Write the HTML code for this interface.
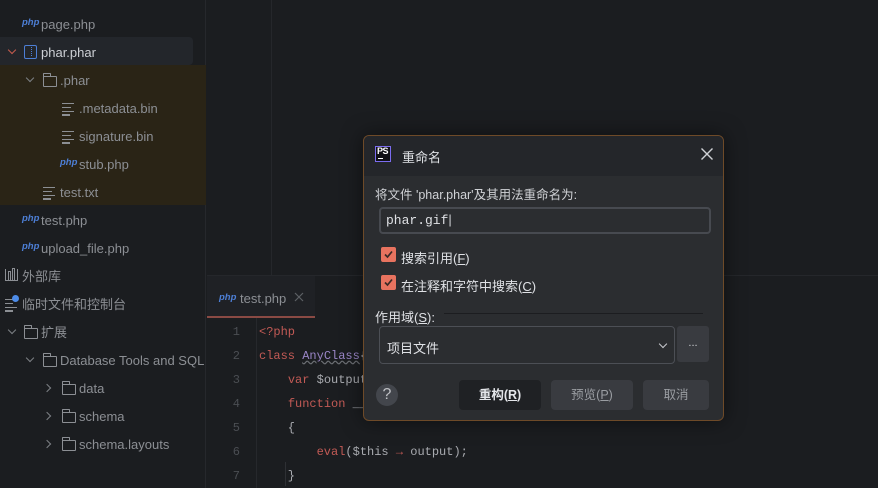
<!DOCTYPE html>
<html><head><meta charset="utf-8"><style>
*{box-sizing:border-box;margin:0;padding:0}
body{width:878px;height:488px;overflow:hidden;background:#1b1d20;font-family:"Liberation Sans","Noto Sans CJK SC",sans-serif;font-size:13px;color:#a9abb0;position:relative}
.a{position:absolute;white-space:nowrap}
.php{position:absolute;font-style:italic;font-weight:bold;font-size:9.5px;color:#4d7fd6;font-family:"Liberation Sans",sans-serif}
.row{position:absolute;height:28px;line-height:29px;white-space:nowrap;color:#8c8f94}
.chev{position:absolute;width:6px;height:6px;border-right:1.5px solid #7d8085;border-bottom:1.5px solid #7d8085}
.fold{position:absolute;width:14px;height:11px;border:1.3px solid #8c8f94;border-radius:1px}
.fold:before{content:"";position:absolute;left:-1.3px;top:-4px;width:6px;height:3px;border:1.3px solid #8c8f94;border-bottom:none;border-radius:1px 1px 0 0}
.txt{position:absolute;width:12px}
.txt i{display:block;height:1.3px;background:#8c8f94;margin-bottom:2.5px}
.code{position:absolute;font-family:"Liberation Mono",monospace;font-size:12px;white-space:pre;line-height:24px}
.ln{position:absolute;left:226px;width:14px;text-align:right;font-family:"Liberation Mono",monospace;font-size:12px;color:#4b4e53}
.cb{position:absolute;width:15px;height:15px;background:#e8735f;border-radius:2px}
.cb svg{position:absolute;left:0;top:0}
.btn{position:absolute;height:30px;line-height:30px;text-align:center;border-radius:4px;font-size:12.5px}
</style></head><body>
<div class="a" style="left:0;top:0;width:206px;height:488px;background:#1b1d20;border-right:1px solid #26282c"></div>
<div class="a" style="left:0;top:65px;width:206px;height:140px;background:#2a2416"></div>
<div class="a" style="left:0;top:37px;width:193px;height:28px;background:#23262b;border-radius:0 4px 4px 0"></div>

<span class="php" style="left:22px;top:17px">php</span><div class="row" style="left:41px;top:10px">page.php</div>
<div class="chev" style="left:9px;top:47px;transform:rotate(45deg);border-color:#c75c4e"></div>
<div class="a" style="left:24px;top:45px;width:13px;height:14px;border:1.3px solid #4d7fd6;border-radius:2px"></div>
<div class="a" style="left:29px;top:47px;width:3px;height:9px;border-right:1.5px dotted #4d7fd6"></div>
<div class="row" style="left:41px;top:38px;color:#cdd0d5">phar.phar</div>
<div class="chev" style="left:27px;top:75px;transform:rotate(45deg)"></div>
<div class="fold" style="left:43px;top:76px"></div><div class="row" style="left:60px;top:66px">.phar</div>
<div class="txt" style="left:62px;top:103px"><i></i><i style="width:9px"></i><i></i><i style="width:8px"></i></div><div class="row" style="left:79px;top:94px">.metadata.bin</div>
<div class="txt" style="left:62px;top:131px"><i></i><i style="width:9px"></i><i></i><i style="width:8px"></i></div><div class="row" style="left:79px;top:122px">signature.bin</div>
<span class="php" style="left:60px;top:157px">php</span><div class="row" style="left:79px;top:150px">stub.php</div>
<div class="txt" style="left:43px;top:187px"><i></i><i style="width:9px"></i><i></i><i style="width:8px"></i></div><div class="row" style="left:60px;top:178px">test.txt</div>
<span class="php" style="left:22px;top:213px">php</span><div class="row" style="left:41px;top:206px">test.php</div>
<span class="php" style="left:22px;top:241px">php</span><div class="row" style="left:41px;top:234px">upload_file.php</div>
<div class="a" style="left:5px;top:269px;width:13px;height:12px;border:1.3px solid #8c8f94;border-top:none"></div>
<div class="a" style="left:8px;top:271px;width:3px;height:10px;border:1.3px solid #8c8f94;border-bottom:none"></div>
<div class="a" style="left:12px;top:268px;width:3px;height:13px;border:1.3px solid #8c8f94;border-bottom:none"></div>
<div class="row" style="left:22px;top:262px">外部库</div>
<div class="txt" style="left:5px;top:299px"><i style="width:8px"></i><i style="width:8px"></i><i></i><i style="width:8px"></i></div>
<div class="a" style="left:12px;top:295px;width:7px;height:7px;border-radius:50%;background:#4d8ce8"></div>
<div class="row" style="left:22px;top:290px">临时文件和控制台</div>
<div class="chev" style="left:9px;top:327px;transform:rotate(45deg)"></div>
<div class="fold" style="left:24px;top:328px"></div><div class="row" style="left:41px;top:318px">扩展</div>
<div class="chev" style="left:27px;top:355px;transform:rotate(45deg)"></div>
<div class="fold" style="left:43px;top:356px"></div><div class="row" style="left:60px;top:346px">Database Tools and SQL</div>
<div class="chev" style="left:44px;top:385px;transform:rotate(-45deg)"></div>
<div class="fold" style="left:62px;top:384px"></div><div class="row" style="left:79px;top:374px">data</div>
<div class="chev" style="left:44px;top:413px;transform:rotate(-45deg)"></div>
<div class="fold" style="left:62px;top:412px"></div><div class="row" style="left:79px;top:402px">schema</div>
<div class="chev" style="left:44px;top:441px;transform:rotate(-45deg)"></div>
<div class="fold" style="left:62px;top:440px"></div><div class="row" style="left:79px;top:430px">schema.layouts</div>

<div class="a" style="left:271px;top:0;width:1px;height:275px;background:#25272b"></div>
<div class="a" style="left:207px;top:275px;width:671px;height:1px;background:#25272b"></div>
<div class="a" style="left:207px;top:276px;width:108px;height:42px;background:#1f2125"></div>
<div class="a" style="left:207px;top:316px;width:108px;height:2px;background:#8a4a44"></div>
<span class="php" style="left:219px;top:292px">php</span>
<div class="a" style="left:240px;top:291px;color:#8c8f94">test.php</div>
<svg class="a" style="left:294px;top:292px" width="10" height="10"><path d="M1 1L9 9M9 1L1 9" stroke="#5d6065" stroke-width="1.2"/></svg>
<div class="a" style="left:256px;top:318px;width:1px;height:170px;background:#26282c"></div>
<div class="a" style="left:285px;top:462px;width:1px;height:24px;background:#2e3034"></div>
<div class="ln" style="top:325px">1</div><div class="ln" style="top:349px">2</div><div class="ln" style="top:373px">3</div><div class="ln" style="top:397px">4</div><div class="ln" style="top:421px">5</div><div class="ln" style="top:445px">6</div><div class="ln" style="top:469px">7</div>
<div class="code" style="left:259px;top:320px"><span style="color:#c25a55">&lt;?php</span>
<span style="color:#c25a55">class</span> <span style="color:#9b86c8;text-decoration:underline wavy #6b6e73">AnyClass</span>{
    <span style="color:#c25a55">var</span> <span style="color:#a9abb0">$output</span>
    <span style="color:#c25a55">function</span> __
    {
        <span style="color:#c25a55">eval</span>($this <span style="color:#c25a55">→</span> output);
    }</div>

<div class="a" style="left:363px;top:135px;width:361px;height:286px;background:#2b2d30;border:1px solid #6e4a28;border-radius:6px;box-shadow:0 0 20px rgba(0,0,0,.5);overflow:hidden">
 <div class="a" style="left:0;top:0;width:361px;height:40px;background:#24262a"></div>
</div>
<div class="a" style="left:375px;top:146px;width:16px;height:16px;background:#101015;border:1.3px solid #7b6cf0"></div>
<div class="a" style="left:377px;top:146px;font-size:9px;font-weight:bold;color:#fff;letter-spacing:-0.5px">PS</div>
<div class="a" style="left:378px;top:158px;width:5px;height:1.3px;background:#fff"></div>
<div class="a" style="left:402px;top:147px;color:#dfe1e5;font-size:13px">重命名</div>
<svg class="a" style="left:701px;top:148px" width="12" height="12"><path d="M0.5 0.5L11.5 11.5M11.5 0.5L0.5 11.5" stroke="#d0d2d6" stroke-width="1.4"/></svg>
<div class="a" style="left:375px;top:184px;color:#d0d2d6;font-size:12.5px">将文件 'phar.phar'及其用法重命名为:</div>
<div class="a" style="left:379px;top:207px;width:332px;height:27px;border:2px solid #474a50;border-radius:4px;background:#2b2d30"></div>
<div class="a" style="left:386px;top:212px;font-family:'Liberation Mono',monospace;color:#dfe1e5;font-size:13px">phar.gif<span style="color:#cfd1d5;font-family:'Liberation Sans'">|</span></div>
<div class="cb" style="left:381px;top:247px"><svg width="15" height="15"><path d="M4 7.5L6.5 10L11 4.5" stroke="#3a2a26" stroke-width="1.7" fill="none"/></svg></div>
<div class="a" style="left:401px;top:248px;color:#dfe1e5">搜索引用(<u>F</u>)</div>
<div class="cb" style="left:381px;top:275px"><svg width="15" height="15"><path d="M4 7.5L6.5 10L11 4.5" stroke="#3a2a26" stroke-width="1.7" fill="none"/></svg></div>
<div class="a" style="left:401px;top:276px;color:#dfe1e5">在注释和字符中搜索(<u>C</u>)</div>
<div class="a" style="left:375px;top:307px;color:#dfe1e5">作用域(<u>S</u>):</div>
<div class="a" style="left:444px;top:313px;width:259px;height:1px;background:#1c1d20"></div>
<div class="a" style="left:379px;top:326px;width:296px;height:38px;border:1px solid #4c4f55;border-radius:4px"></div>
<div class="a" style="left:387px;top:338px;color:#dfe1e5">项目文件</div>
<div class="chev" style="left:660px;top:341px;transform:rotate(45deg);border-color:#c8cace"></div>
<div class="a" style="left:677px;top:326px;width:32px;height:36px;background:#393b40;border-radius:3px;color:#cfd1d5;text-align:center;line-height:34px;font-size:11px">...</div>
<div class="a" style="left:376px;top:384px;width:22px;height:22px;border-radius:50%;background:#43464c;color:#bfc1c5;text-align:center;line-height:22px;font-size:16px">?</div>
<div class="btn" style="left:459px;top:380px;width:82px;background:#1f2124;color:#e4e6ea;font-weight:bold">重构(<u>R</u>)</div>
<div class="btn" style="left:551px;top:380px;width:82px;background:#393b40;color:#9a9da2">预览(<u>P</u>)</div>
<div class="btn" style="left:643px;top:380px;width:66px;background:#393b40;color:#9a9da2">取消</div>
</body></html>
